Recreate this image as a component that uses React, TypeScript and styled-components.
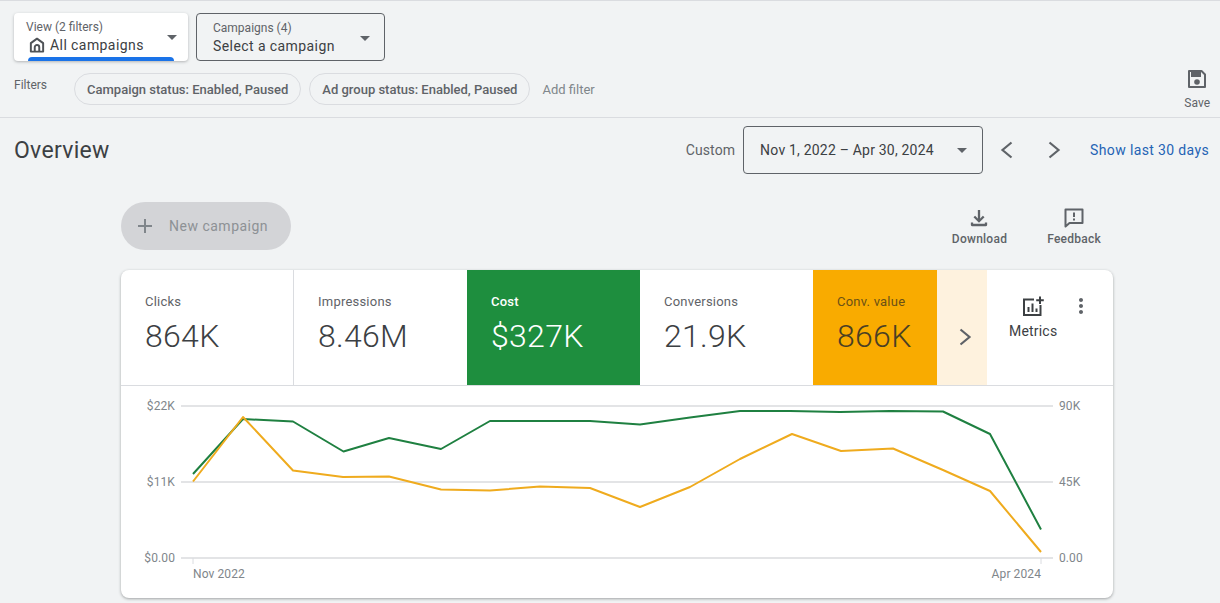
import React from "react";
import styled, { createGlobalStyle } from "styled-components";
import { MdAdd, MdArrowDropDown, MdMoreVert } from "react-icons/md";

const Global = createGlobalStyle`
  html, body { margin: 0; padding: 0; background: #f1f3f4; }
  * { box-sizing: border-box; }
  body { font-family: Roboto, "Liberation Sans", sans-serif; color: #3c4043; }
`;

const Page = styled.div`
  width: 1220px;
  height: 603px;
  overflow: hidden;
  background: #f1f3f4;
  border-top: 1px solid #dadce0;
  display: flex;
  flex-direction: column;
`;

const PickerRow = styled.div`
  display: flex;
  gap: 8px;
  padding: 12px 14px 0;
`;

const Picker = styled.div<{ $active?: boolean; $width: number }>`
  position: relative;
  width: ${(p) => p.$width}px;
  height: 48px;
  border-radius: 4px;
  background: ${(p) => (p.$active ? "#fff" : "transparent")};
  border: ${(p) => (p.$active ? "none" : "1px solid #5f6368")};
  box-shadow: ${(p) => (p.$active ? "0 1px 3px rgba(60,64,67,.35)" : "none")};
  overflow: hidden;
  padding: ${(p) => (p.$active ? "7px 12px" : "7px 16px")};
`;

const PickerLabel = styled.div`
  font-size: 12px;
  line-height: 14px;
  color: #5f6368;
`;

const PickerValue = styled.div`
  display: flex;
  align-items: center;
  gap: 4px;
  margin-top: 2px;
  font-size: 14px;
  line-height: 18px;
  letter-spacing: 0.42px;
  color: #3c4043;
`;

const PickerCaret = styled.span<{ $right: number }>`
  position: absolute;
  right: ${(p) => p.$right}px;
  top: 12px;
  display: flex;
  color: #5f6368;
`;

const ActiveBar = styled.div`
  position: absolute;
  left: 14px;
  right: 14px;
  bottom: 0;
  height: 4px;
  border-radius: 4px 4px 0 0;
  background: #1a73e8;
`;

const FilterRow = styled.div`
  display: flex;
  align-items: flex-start;
  height: 57px;
  padding: 12px 10px 0 14px;
  border-bottom: 1px solid #dadce0;
`;

const FilterLabel = styled.div`
  width: 60px;
  font-size: 12px;
  line-height: 24px;
  color: #5f6368;
`;

const Chip = styled.div`
  height: 32px;
  padding: 0 12px;
  margin-right: 8px;
  border: 1px solid #dadce0;
  border-radius: 16px;
  font-size: 13px;
  font-weight: 500;
  line-height: 31px;
  color: #5f6368;
  white-space: nowrap;
`;

const AddFilter = styled.div`
  margin-left: 4px;
  font-size: 13px;
  line-height: 33px;
  color: #80868b;
`;

const SaveButton = styled.div`
  margin-left: auto;
  margin-top: -6px;
  display: flex;
  flex-direction: column;
  align-items: center;
  font-size: 12px;
  color: #5f6368;
  line-height: 14px;
  gap: 5px;
`;

const OverviewRow = styled.div`
  display: flex;
  align-items: center;
  height: 48px;
  margin-top: 8px;
  padding: 0 11px 0 14px;
`;

const Title = styled.h1`
  margin: 0;
  font-size: 23px;
  font-weight: 400;
  color: #3c4043;
  letter-spacing: 0.3px;
`;

const CustomLabel = styled.div`
  margin-left: auto;
  margin-right: 8px;
  font-size: 14px;
  letter-spacing: 0.1px;
  color: #5f6368;
`;

const DateBox = styled.div`
  display: flex;
  align-items: center;
  justify-content: space-between;
  width: 240px;
  height: 48px;
  padding: 0 4px 0 16px;
  border: 1px solid #5f6368;
  border-radius: 4px;
  font-size: 14px;
  letter-spacing: 0.2px;
  color: #3c4043;
`;

const Arrows = styled.div`
  display: flex;
  gap: 11px;
  margin: 0 18px 0 6px;
  color: #5f6368;
`;

const ShowLink = styled.div`
  font-size: 14px;
  letter-spacing: 0.36px;
  color: #2563b4;
`;

const Content = styled.div`
  width: 992px;
  margin: 28px 0 0 121px;
`;

const ActionRow = styled.div`
  display: flex;
  align-items: center;
  height: 48px;
  margin-bottom: 20px;
`;

const NewCampaign = styled.div`
  display: flex;
  align-items: center;
  gap: 12px;
  width: 170px;
  height: 48px;
  padding-left: 12px;
  border-radius: 24px;
  background: #d3d4d7;
  color: #8d9195;
  font-size: 14px;
  font-weight: 400;
  letter-spacing: 0.5px;
`;

const ActionButtons = styled.div`
  display: flex;
  margin-left: auto;
  margin-right: 12px;
  gap: 40px;
`;

const ActionButton = styled.div`
  display: flex;
  flex-direction: column;
  align-items: center;
  gap: 2px;
  margin-top: -1px;
  font-size: 12px;
  font-weight: 500;
  line-height: 14px;
  letter-spacing: 0.25px;
  color: #5f6368;
`;

const Card = styled.div`
  height: 328px;
  border-radius: 8px;
  background: #fff;
  box-shadow: 0 1px 3px rgba(60, 64, 67, 0.45);
  overflow: hidden;
`;

const TileRow = styled.div`
  display: flex;
  height: 116px;
  border-bottom: 1px solid #dadce0;
`;

const Tile = styled.div<{ $width: number; $bg?: string; $fg?: string; $divider?: boolean }>`
  width: ${(p) => p.$width}px;
  padding: 24px 0 0 24px;
  background: ${(p) => p.$bg ?? "transparent"};
  color: ${(p) => p.$fg ?? "#3c4043"};
  border-right: ${(p) => (p.$divider ? "1px solid #dadce0" : "none")};
`;

const TileLabel = styled.div<{ $strong?: boolean; $color?: string }>`
  font-size: 13px;
  line-height: 15px;
  letter-spacing: 0.22px;
  font-weight: ${(p) => (p.$strong ? 500 : 400)};
  color: ${(p) => p.$color ?? "#5f6368"};
`;

const TileValue = styled.div`
  margin-top: 8px;
  font-size: 32px;
  font-weight: 300;
  line-height: 38px;
  letter-spacing: 0.3px;
`;

const MoreTile = styled.div`
  display: flex;
  align-items: center;
  justify-content: center;
  width: 50px;
  padding-left: 6px;
  padding-top: 19px;
  background: #fef2de;
  color: #5f6368;
`;

const MetricsTile = styled.div`
  position: relative;
  flex: 1;
  padding: 24px 0 0 22px;
  font-size: 14px;
  color: #5f6368;
  letter-spacing: 0.2px;
`;

const MetricsButton = styled.div`
  display: flex;
  flex-direction: column;
  align-items: flex-start;
  gap: 5px;
  color: #3c4043;
`;

const MetricsIcon = styled.span`
  display: flex;
  margin-left: 12px;
`;

const MoreMenu = styled.span`
  position: absolute;
  top: 24px;
  right: 20px;
  display: flex;
  color: #5f6368;
`;

const ChartSvg = styled.svg`
  display: block;
  width: 992px;
  height: 212px;
  font-family: Roboto, "Liberation Sans", sans-serif;
  font-size: 12px;
  letter-spacing: 0.1px;
  fill: #80868b;
`;

const HomeIcon = () => (
  <svg width="18" height="18" viewBox="0 0 24 24" fill="none" stroke="#4f5357" strokeWidth="2.6" style={{ marginLeft: 2 }}>
    <path d="M12 3.5 L3.8 9.5 V20.8 H20.2 V9.5 Z" strokeLinejoin="round" />
    <path d="M9 20.8 V15 a3 3 0 0 1 6 0 V20.8" />
  </svg>
);

const SaveIcon = () => (
  <svg width="24" height="24" viewBox="0 0 24 24" fill="none" stroke="currentColor" strokeWidth="2">
    <path d="M4 4 H16.5 L20 7.5 V20 H4 Z" strokeLinejoin="round" />
    <path d="M7 4.5 H15 V9 H7 Z" fill="currentColor" />
    <circle cx="12" cy="15" r="2.8" fill="currentColor" stroke="none" />
  </svg>
);

const DownloadIcon = () => (
  <svg width="24" height="24" viewBox="0 0 24 24" fill="none" stroke="currentColor" strokeWidth="2.3">
    <path d="M12 4 V14.5" />
    <path d="M7.3 10.5 L12 15.2 L16.7 10.5" />
    <path d="M5 16.5 V19 H19 V16.5" strokeLinejoin="round" />
  </svg>
);

const FeedbackIcon = () => (
  <svg width="24" height="24" viewBox="0 0 24 24" fill="none" stroke="currentColor" strokeWidth="2">
    <path d="M3.5 3.5 H20.5 V17 H7.5 L3.5 20.5 Z" strokeLinejoin="round" />
    <path d="M12 6.5 V11 M12 12.5 V14.5" />
  </svg>
);

const AddChartIcon = () => (
  <svg width="24" height="24" viewBox="0 0 24 24" fill="none" stroke="currentColor" strokeWidth="2">
    <path d="M13 5.5 H3 V21 H19.5 V11" />
    <path d="M7.5 13 V18 M11.5 9.5 V18 M15.5 14.5 V18" />
    <path d="M19 2.5 V10 M15.2 6.3 H22.8" />
  </svg>
);

const Chevron = ({ dir }: { dir: "left" | "right" }) => (
  <svg width="36" height="36" viewBox="0 0 36 36" fill="none" stroke="currentColor" strokeWidth="2.2">
    <polyline points={dir === "left" ? "22.5,10.5 13.5,18 22.5,25.5" : "13.5,10.5 22.5,18 13.5,25.5"} />
  </svg>
);

const green = [
  [193, 474], [243, 419], [293, 421.5], [343.5, 451.5], [389, 438], [441, 449], [490, 421],
  [540, 421], [590, 421], [640, 424.5], [690, 417.5], [740, 411], [790, 411], [840, 412],
  [890, 411], [943, 411.5], [990, 434], [1041, 529.5],
];
const orange = [
  [193, 481.5], [243, 417], [293, 470.5], [343, 477], [389, 476.5], [441, 489.5], [490, 490.5],
  [540, 486.5], [590, 488], [640, 507], [690, 487], [740, 459], [792, 434], [841, 451],
  [893, 448.5], [943, 470], [990, 491], [1041, 552],
];
const OX = 121;
const OY = 386;
const toPoints = (d: number[][]) => d.map(([x, y]) => `${x - OX},${y - OY}`).join(" ");

const grid = [
  { y: 406, left: "$22K", right: "90K" },
  { y: 482, left: "$11K", right: "45K" },
  { y: 558, left: "$0.00", right: "0.00" },
];

const Chart = () => (
  <ChartSvg viewBox="0 0 992 212">
    {grid.map((g) => (
      <g key={g.y}>
        <line x1={60} x2={932} y1={g.y - OY} y2={g.y - OY} stroke="#e3e4e6" strokeWidth={2} />
        <text x={54} y={g.y - OY + 4} textAnchor="end">{g.left}</text>
        <text x={938} y={g.y - OY + 4}>{g.right}</text>
      </g>
    ))}
    <line x1={72} x2={72} y1={172} y2={178} stroke="#dadce0" />
    <line x1={920} x2={920} y1={172} y2={178} stroke="#dadce0" />
    <text x={72} y={192}>Nov 2022</text>
    <text x={920} y={192} textAnchor="end">Apr 2024</text>
    <polyline points={toPoints(green)} fill="none" stroke="#1f8041" strokeWidth={2} strokeLinejoin="round" />
    <polyline points={toPoints(orange)} fill="none" stroke="#efab1e" strokeWidth={2} strokeLinejoin="round" />
  </ChartSvg>
);

const tiles = [
  { label: "Clicks", value: "864K", width: 173, divider: true },
  { label: "Impressions", value: "8.46M", width: 173 },
];

export default function App() {
  return (
    <Page>
      <Global />
      <PickerRow>
        <Picker $active $width={174}>
          <PickerLabel>View (2 filters)</PickerLabel>
          <PickerValue>
            <HomeIcon />
            All campaigns
          </PickerValue>
          <PickerCaret $right={4}><MdArrowDropDown size={24} /></PickerCaret>
          <ActiveBar />
        </Picker>
        <Picker $width={189}>
          <PickerLabel>Campaigns (4)</PickerLabel>
          <PickerValue>Select a campaign</PickerValue>
          <PickerCaret $right={7}><MdArrowDropDown size={24} /></PickerCaret>
        </Picker>
      </PickerRow>

      <FilterRow>
        <FilterLabel>Filters</FilterLabel>
        <Chip>Campaign status: Enabled, Paused</Chip>
        <Chip>Ad group status: Enabled, Paused</Chip>
        <AddFilter>Add filter</AddFilter>
        <SaveButton>
          <SaveIcon />
          Save
        </SaveButton>
      </FilterRow>

      <OverviewRow>
        <Title>Overview</Title>
        <CustomLabel>Custom</CustomLabel>
        <DateBox>
          Nov 1, 2022 – Apr 30, 2024
          <MdArrowDropDown size={24} color="#5f6368" style={{ marginRight: 4 }} />
        </DateBox>
        <Arrows>
          <Chevron dir="left" />
          <Chevron dir="right" />
        </Arrows>
        <ShowLink>Show last 30 days</ShowLink>
      </OverviewRow>

      <Content>
        <ActionRow>
          <NewCampaign>
            <MdAdd size={24} color="#80868b" />
            New campaign
          </NewCampaign>
          <ActionButtons>
            <ActionButton>
              <DownloadIcon />
              Download
            </ActionButton>
            <ActionButton>
              <FeedbackIcon />
              Feedback
            </ActionButton>
          </ActionButtons>
        </ActionRow>

        <Card>
          <TileRow>
            {tiles.map((t) => (
              <Tile key={t.label} $width={t.width} $divider={t.divider}>
                <TileLabel>{t.label}</TileLabel>
                <TileValue>{t.value}</TileValue>
              </Tile>
            ))}
            <Tile $width={173} $bg="#1e8e3e" $fg="#fff">
              <TileLabel $strong $color="#fff">Cost</TileLabel>
              <TileValue>$327K</TileValue>
            </Tile>
            <Tile $width={173}>
              <TileLabel>Conversions</TileLabel>
              <TileValue>21.9K</TileValue>
            </Tile>
            <Tile $width={124} $bg="#f9ab00" $fg="#4a3f24">
              <TileLabel $color="#6b5116">Conv. value</TileLabel>
              <TileValue>866K</TileValue>
            </Tile>
            <MoreTile><Chevron dir="right" /></MoreTile>
            <MetricsTile>
              <MetricsButton>
                <MetricsIcon><AddChartIcon /></MetricsIcon>
                Metrics
              </MetricsButton>
              <MoreMenu><MdMoreVert size={24} /></MoreMenu>
            </MetricsTile>
          </TileRow>
          <Chart />
        </Card>
      </Content>
    </Page>
  );
}
